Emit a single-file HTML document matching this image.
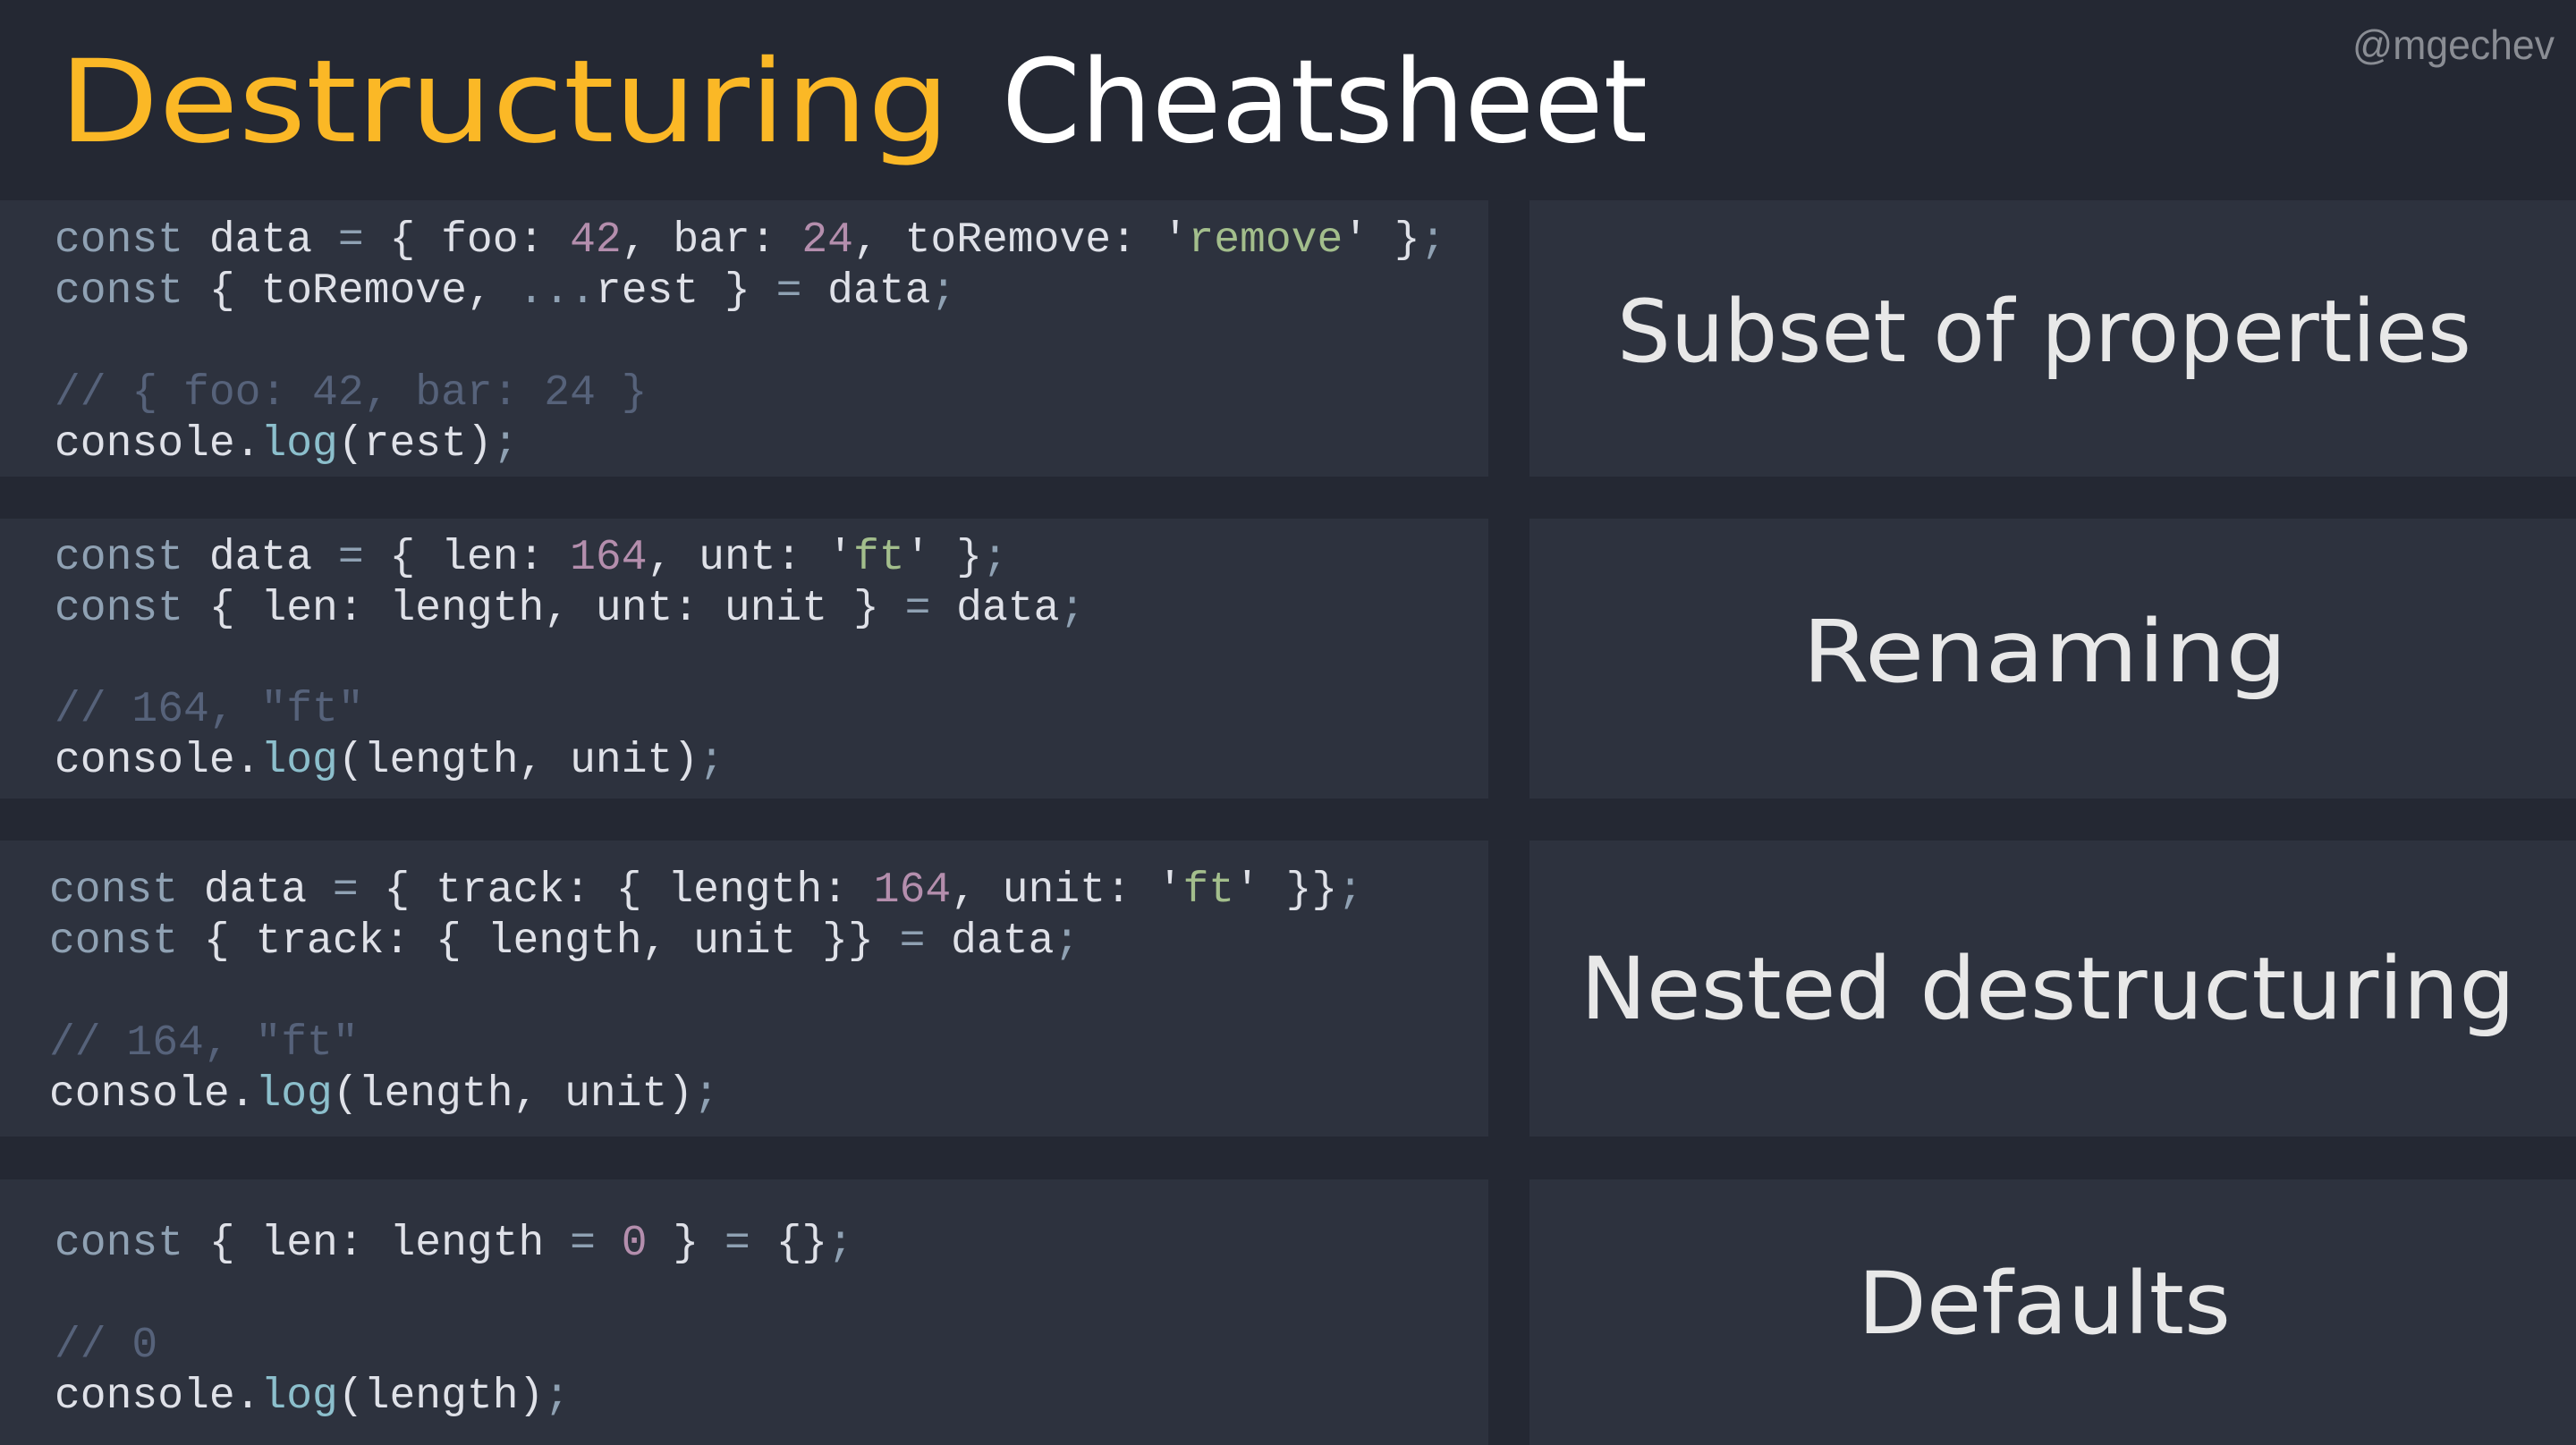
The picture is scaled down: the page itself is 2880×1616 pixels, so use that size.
<!DOCTYPE html>
<html><head><meta charset="utf-8"><style>
html,body{margin:0;padding:0;background:#242833;width:2880px;height:1616px;overflow:hidden}
svg{display:block}
.c{font-family:"Liberation Mono","DejaVu Sans Mono",monospace;font-size:48px;fill:#dfe1e8}
.k{fill:#8fa1b3}.n{fill:#b48ead}.s{fill:#a3be8c}.m{fill:#56627a}.f{fill:#8cbfcc}.p{fill:#8fa1b3}
.h{font-family:"DejaVu Sans",sans-serif;fill:#e8e8e8}
</style></head><body>
<svg width="2880" height="1616" viewBox="0 0 2880 1616" xmlns="http://www.w3.org/2000/svg">
<rect width="2880" height="1616" fill="#242833"/>
<g fill="#2d323e">
<rect x="0" y="224" width="1664" height="309"/><rect x="1710" y="224" width="1170" height="309"/>
<rect x="0" y="580" width="1664" height="313"/><rect x="1710" y="580" width="1170" height="313"/>
<rect x="0" y="940" width="1664" height="331"/><rect x="1710" y="940" width="1170" height="331"/>
<rect x="0" y="1319" width="1664" height="297"/><rect x="1710" y="1319" width="1170" height="297"/>
</g>
<text x="66" y="158" class="h" font-size="128" style="fill:#fbb826" textLength="996" lengthAdjust="spacingAndGlyphs">Destructuring</text>
<text x="1120" y="158" class="h" font-size="128" style="fill:#ffffff" textLength="722" lengthAdjust="spacingAndGlyphs">Cheatsheet</text>
<text x="2630" y="66" font-family="Liberation Sans,sans-serif" font-size="46" fill="#8a8d94" textLength="226" lengthAdjust="spacingAndGlyphs">@mgechev</text>

<g class="c" xml:space="preserve">
<text x="61" y="281"><tspan class="k">const</tspan> data <tspan class="p">=</tspan> { foo: <tspan class="n">42</tspan>, bar: <tspan class="n">24</tspan>, toRemove: '<tspan class="s">remove</tspan>' }<tspan class="p">;</tspan></text>
<text x="61" y="338"><tspan class="k">const</tspan> { toRemove, <tspan class="p">...</tspan>rest } <tspan class="p">=</tspan> data<tspan class="p">;</tspan></text>
<text x="61" y="452" class="m">// { foo: 42, bar: 24 }</text>
<text x="61" y="509">console.<tspan class="f">log</tspan>(rest)<tspan class="p">;</tspan></text>

<text x="61" y="636"><tspan class="k">const</tspan> data <tspan class="p">=</tspan> { len: <tspan class="n">164</tspan>, unt: '<tspan class="s">ft</tspan>' }<tspan class="p">;</tspan></text>
<text x="61" y="693"><tspan class="k">const</tspan> { len: length, unt: unit } <tspan class="p">=</tspan> data<tspan class="p">;</tspan></text>
<text x="61" y="806" class="m">// 164, "ft"</text>
<text x="61" y="863">console.<tspan class="f">log</tspan>(length, unit)<tspan class="p">;</tspan></text>

<text x="55" y="1008"><tspan class="k">const</tspan> data <tspan class="p">=</tspan> { track: { length: <tspan class="n">164</tspan>, unit: '<tspan class="s">ft</tspan>' }}<tspan class="p">;</tspan></text>
<text x="55" y="1065"><tspan class="k">const</tspan> { track: { length, unit }} <tspan class="p">=</tspan> data<tspan class="p">;</tspan></text>
<text x="55" y="1179" class="m">// 164, "ft"</text>
<text x="55" y="1236">console.<tspan class="f">log</tspan>(length, unit)<tspan class="p">;</tspan></text>

<text x="61" y="1403"><tspan class="k">const</tspan> { len: length <tspan class="p">=</tspan> <tspan class="n">0</tspan> } <tspan class="p">=</tspan> {}<tspan class="p">;</tspan></text>
<text x="61" y="1517" class="m">// 0</text>
<text x="61" y="1574">console.<tspan class="f">log</tspan>(length)<tspan class="p">;</tspan></text>
</g>

<text x="1808" y="404" class="h" font-size="96" textLength="955" lengthAdjust="spacingAndGlyphs">Subset of properties</text>
<text x="2015" y="762" class="h" font-size="96" textLength="542" lengthAdjust="spacingAndGlyphs">Renaming</text>
<text x="1767" y="1139" class="h" font-size="96" textLength="1045" lengthAdjust="spacingAndGlyphs">Nested destructuring</text>
<text x="2077" y="1491" class="h" font-size="96" textLength="417" lengthAdjust="spacingAndGlyphs">Defaults</text>
</svg>
</body></html>
